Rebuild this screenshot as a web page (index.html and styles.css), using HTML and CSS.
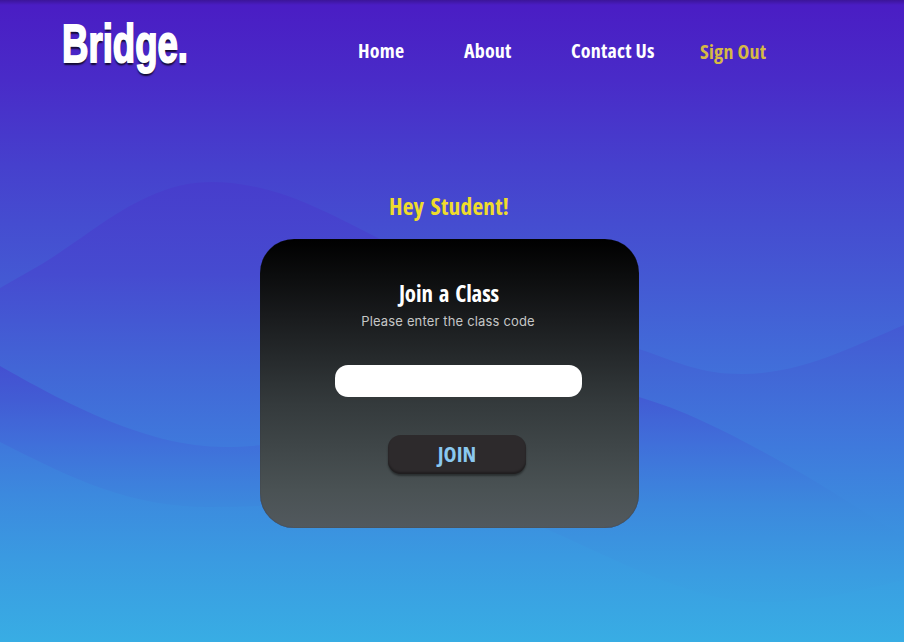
FILE: index.html
```
<!DOCTYPE html>
<html lang="en">
<head>
<meta charset="utf-8">
<title>Bridge</title>
<link rel="stylesheet" href="styles.css">
</head>
<body>
<svg class="waves" viewBox="0 0 904 642" preserveAspectRatio="none" aria-hidden="true">
  <defs>
    <linearGradient id="upper" gradientUnits="userSpaceOnUse" x1="0" y1="182" x2="0" y2="600">
      <stop offset="0" stop-color="#473dcc"/>
      <stop offset=".22" stop-color="#464bd0"/>
      <stop offset=".45" stop-color="#4266d6"/>
      <stop offset=".63" stop-color="#3f79dc"/>
      <stop offset=".84" stop-color="#3b91df"/>
      <stop offset="1" stop-color="#39a3e3"/>
    </linearGradient>
    <linearGradient id="lower" gradientUnits="userSpaceOnUse" x1="0" y1="366" x2="0" y2="642">
      <stop offset="0" stop-color="#4450d1"/>
      <stop offset=".12" stop-color="#425cd4"/>
      <stop offset=".28" stop-color="#406fda"/>
      <stop offset=".5" stop-color="#3c88dd"/>
      <stop offset=".75" stop-color="#3a9ce1"/>
      <stop offset="1" stop-color="#38ade4"/>
    </linearGradient>
    <linearGradient id="base" gradientUnits="userSpaceOnUse" x1="0" y1="430" x2="0" y2="642">
      <stop offset="0" stop-color="#4073db"/>
      <stop offset=".3" stop-color="#3c89de"/>
      <stop offset=".6" stop-color="#3a9ae1"/>
      <stop offset="1" stop-color="#38ade4"/>
    </linearGradient>
  </defs>
  <path fill="url(#upper)" d="M0 288L42 264C96 231 145 182 211 182C276 182 330 214 380 239C480 282 570 322 639 349C680 363 700 374 742 374C800 374 850 348 904 325V642H0Z"/>
  <path fill="url(#lower)" d="M0 366C60 400 145 447 225 447C350 447 440 380 540 380C573 380 610 387 639 397C690 412 735 436 785 464C832 490 866 514 904 537V642H0Z"/>
  <path fill="url(#base)" d="M0 442C75 480 130 507 210 507C330 507 400 488 480 505C560 524 670 602 760 602C820 602 860 590 904 580V642H0Z"/>
</svg>
<div class="page">
  <header class="header">
    <a class="logo">Bridge.</a>
    <nav class="nav">
      <a class="nav-link home">Home</a>
      <a class="nav-link about">About</a>
      <a class="nav-link contact">Contact Us</a>
      <a class="nav-link sign-out">Sign Out</a>
    </nav>
  </header>
  <main class="main">
    <h1 class="greeting">Hey Student!</h1>
    <form class="card">
      <h2 class="card-title">Join a Class</h2>
      <p class="card-hint">Please enter the class code</p>
      <input class="code-input" type="text" aria-label="Class code">
      <button class="join" type="button">JOIN</button>
    </form>
  </main>
</div>
</body>
</html>
```
FILE: styles.css
```
* { box-sizing: border-box; }

body {
  margin: 0;
  height: 642px;
  overflow: hidden;
  background: linear-gradient(#3c1599 0, #4a1dc4 5px, #492bc8 80px, #4640cd 165px, #4459d3 280px, #4170da 375px, #38ade4 642px);
  font-family: "Open Sans", sans-serif;
  font-stretch: 75%;
  font-weight: 700;
}

.waves {
  position: absolute;
  inset: 0;
  width: 100%;
  height: 642px;
}

.page { position: relative; }

.header {
  display: flex;
  height: 100px;
  padding: 15px 0 0 62px;
}

.logo {
  width: 296px;
  color: #fff;
  font-family: "Liberation Sans", sans-serif;
  font-size: 53px;
  font-weight: 700;
  line-height: 58px;
  transform: scaleX(.69);
  transform-origin: left;
  -webkit-text-stroke: 2px #fff;
  text-shadow: 0 3px 2px rgba(0, 0, 0, .75);
}

.nav {
  display: flex;
  padding-top: 22px;
}

.nav-link {
  color: #fff;
  font-size: 20px;
  letter-spacing: .2px;
  line-height: 27px;
  white-space: nowrap;
}

.home { width: 106px; }
.about { width: 107px; }
.contact { width: 129px; }
.sign-out { padding-top: 1px; color: #d6b945; }

.main {
  display: flex;
  flex-direction: column;
  align-items: center;
  width: 898px;
}

.greeting {
  margin: 90px 0 16px;
  color: #efdc2c;
  font-size: 23.5px;
  letter-spacing: .15px;
  line-height: 33px;
  word-spacing: 2px;
}

.card {
  display: flex;
  flex-direction: column;
  align-items: center;
  width: 379px;
  height: 289px;
  padding-top: 38px;
  border-radius: 34px;
  background: linear-gradient(#000, #191b1d 27%, #343a3c 57%, #4a5254 87%, #52595e);
  box-shadow: inset 0 0 1px rgba(30, 35, 70, .8);
}

.card-title {
  margin: 0;
  color: #fff;
  font-size: 23px;
  letter-spacing: -.15px;
  line-height: 33px;
  word-spacing: 2px;
}

.card-hint {
  margin: 2px 2px 0 0;
  color: #c5c6c6;
  font: 400 13px/18px Inter, sans-serif;
  letter-spacing: .16px;
}

.code-input {
  width: 247px;
  height: 32px;
  margin: 35px 0 38px 19px;
  padding: 0 12px;
  border: 0;
  border-radius: 13px;
  background: #fff;
}

.join {
  width: 138px;
  height: 39px;
  margin-left: 16px;
  padding: 0 0 2px;
  border: 0;
  border-radius: 13px;
  background: #2d2a2c;
  box-shadow: 0 2px 2px rgba(0, 0, 0, .4), inset 0 -2px 2px rgba(0, 0, 0, .3);
  color: #8ac8f0;
  font: inherit;
  font-size: 22px;
  line-height: 37px;
}
```
